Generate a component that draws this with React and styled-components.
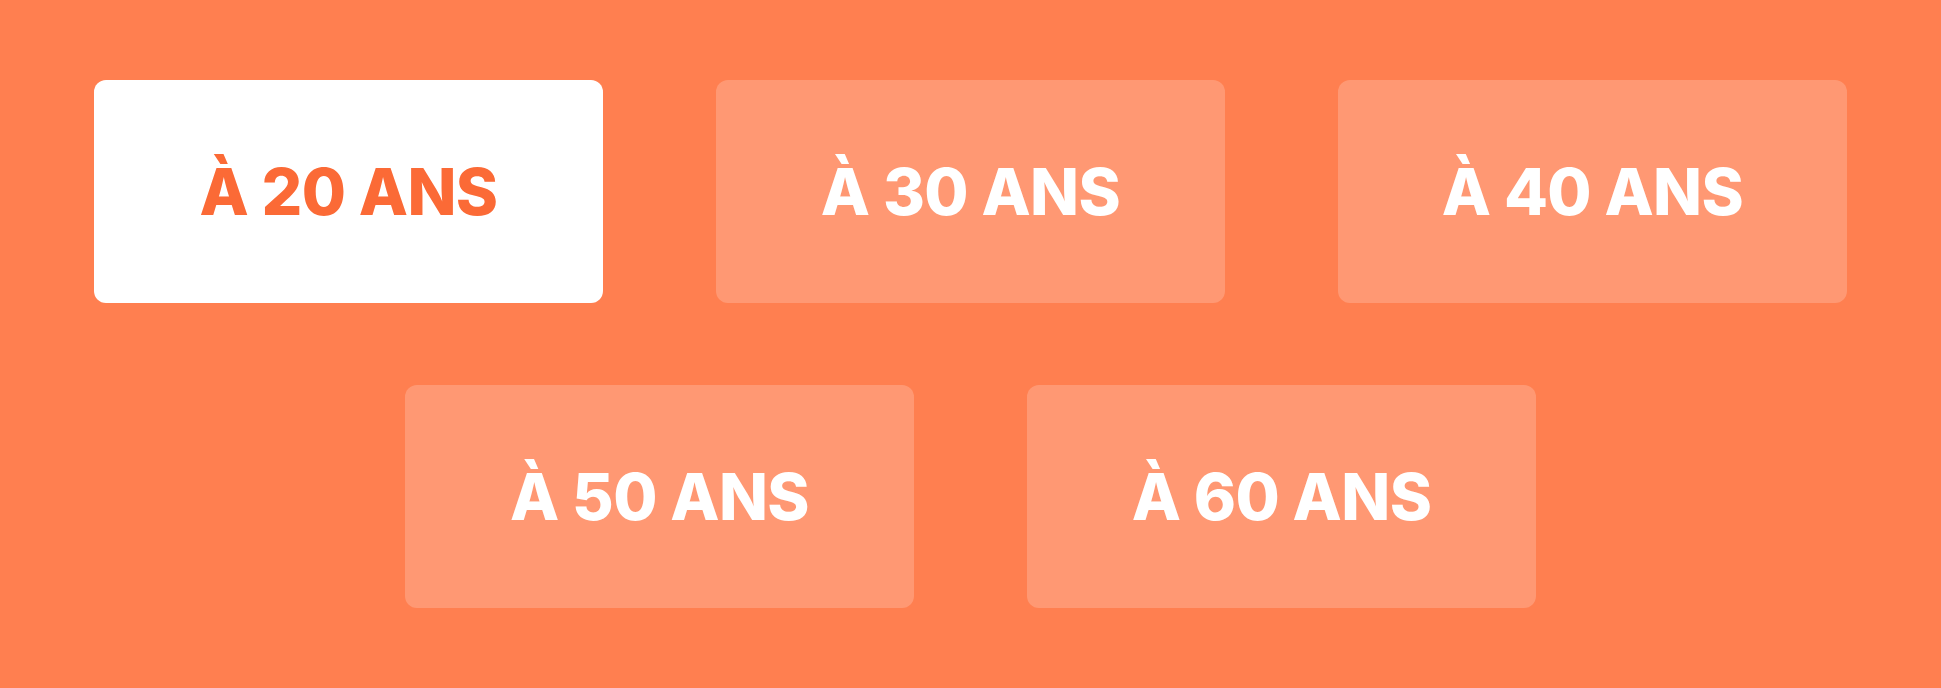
import React, { useState } from "react";
import styled, { createGlobalStyle } from "styled-components";

const GlobalStyle = createGlobalStyle`
  html, body {
    margin: 0;
    padding: 0;
    background: #ff7f50;
  }
`;

const Page = styled.div`
  width: 1941px;
  height: 688px;
  box-sizing: border-box;
  padding: 80px 0;
  background: #ff7f50;
  display: flex;
  flex-direction: column;
  align-items: center;
  gap: 82px;
  font-family: Inter, "Liberation Sans", sans-serif;
`;

const Row = styled.div`
  display: flex;
  justify-content: center;
  gap: 113px;
`;

const AgeCard = styled.button`
  width: 509px;
  height: 223px;
  border: none;
  border-radius: 12px;
  padding: 0;
  cursor: pointer;
  display: flex;
  align-items: center;
  justify-content: center;
  background: ${(p) => (p.$active ? "#ffffff" : "rgba(255, 255, 255, 0.2)")};
  color: ${(p) => (p.$active ? "#fb6a36" : "#ffffff")};
  font-family: inherit;
  font-size: 64px;
  font-weight: 800;
  letter-spacing: -0.6px;
  line-height: 1;
`;

const rows = [
  [20, 30, 40],
  [50, 60],
];

const App = () => {
  const [selected, setSelected] = useState(20);

  return (
    <>
      <GlobalStyle />
      <Page>
        {rows.map((row, i) => (
          <Row key={i}>
            {row.map((age) => (
              <AgeCard
                key={age}
                $active={selected === age}
                onClick={() => setSelected(age)}
              >
                À {age} ANS
              </AgeCard>
            ))}
          </Row>
        ))}
      </Page>
    </>
  );
};

export default App;
